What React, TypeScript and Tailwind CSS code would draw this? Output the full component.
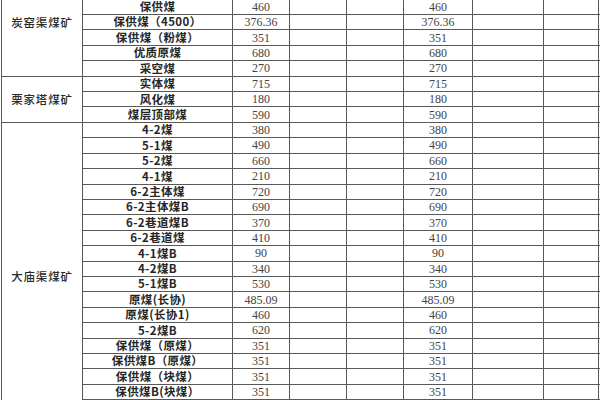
import React from "react";

type Row = { name: string; price: string };
type Group = { mine: string; rows: Row[] };

// the screenshot is a crop of a longer sheet: two rows sit above and below the frame
const groups: Group[] = [
  {
    mine: "炭窑渠煤矿",
    rows: [
      { name: "", price: "" },
      { name: "", price: "" },
      { name: "保供煤", price: "460" },
      { name: "保供煤（4500）", price: "376.36" },
      { name: "保供煤（粉煤）", price: "351" },
      { name: "优质原煤", price: "680" },
      { name: "采空煤", price: "270" },
    ],
  },
  {
    mine: "栗家塔煤矿",
    rows: [
      { name: "实体煤", price: "715" },
      { name: "风化煤", price: "180" },
      { name: "煤层顶部煤", price: "590" },
    ],
  },
  {
    mine: "大庙渠煤矿",
    rows: [
      { name: "4-2煤", price: "380" },
      { name: "5-1煤", price: "490" },
      { name: "5-2煤", price: "660" },
      { name: "4-1煤", price: "210" },
      { name: "6-2主体煤", price: "720" },
      { name: "6-2主体煤B", price: "690" },
      { name: "6-2巷道煤B", price: "370" },
      { name: "6-2巷道煤", price: "410" },
      { name: "4-1煤B", price: "90" },
      { name: "4-2煤B", price: "340" },
      { name: "5-1煤B", price: "530" },
      { name: "原煤(长协)", price: "485.09" },
      { name: "原煤(长协1)", price: "460" },
      { name: "5-2煤B", price: "620" },
      { name: "保供煤（原煤）", price: "351" },
      { name: "保供煤B（原煤）", price: "351" },
      { name: "保供煤（块煤）", price: "351" },
      { name: "保供煤B(块煤）", price: "351" },
      { name: "", price: "" },
      { name: "", price: "" },
    ],
  },
];

const spans: Record<number, string> = {
  3: "row-span-3",
  7: "row-span-7",
  20: "row-span-20",
};

const cjk = "font-['Noto_Sans_CJK_SC',sans-serif]";
const num = "font-['Liberation_Serif','Noto_Sans_CJK_SC',serif]";

function Empty() {
  return <div className="bg-white" />;
}

export default function App() {
  return (
    <div className="h-[400px] w-[600px] overflow-hidden bg-white">
      <div className="ml-[1px] mt-[-32.2px] grid auto-rows-[14.41px] grid-cols-[80px_149px_56px_56px_56px_68px_70px_54px_20px] gap-px bg-[#585858] p-px">
        {groups.map((g) =>
          g.rows.map((r, i) => (
            <React.Fragment key={g.mine + i}>
              {i === 0 && (
                <div
                  className={`${spans[g.rows.length]} col-start-1 flex items-center justify-center bg-white text-[11.5px] font-medium tracking-[0.8px] text-[#2b2b2b] ${cjk}`}
                >
                  {g.mine}
                </div>
              )}
              <div
                className={`col-start-2 flex items-center justify-center bg-white text-[11.5px] font-semibold leading-none tracking-[0.4px] text-[#262626] ${cjk}`}
              >
                {r.name}
              </div>
              <div
                className={`flex items-center justify-center bg-white text-[12px] leading-none text-[#444] ${num}`}
              >
                {r.price}
              </div>
              <Empty />
              <Empty />
              <div
                className={`flex items-center justify-center bg-white text-[12px] leading-none text-[#444] ${num}`}
              >
                {r.price}
              </div>
              <Empty />
              <Empty />
              <Empty />
            </React.Fragment>
          ))
        )}
      </div>
    </div>
  );
}
